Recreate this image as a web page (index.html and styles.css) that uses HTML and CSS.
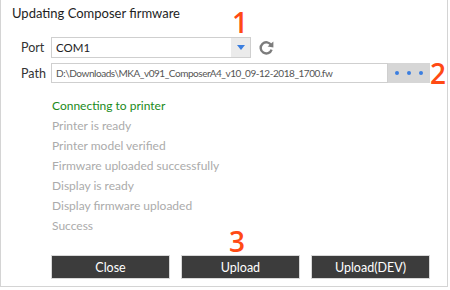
FILE: index.html
```html
<!DOCTYPE html>
<html lang="en">
<head>
    <meta charset="UTF-8">
    <title>Updating Composer firmware</title>
    <link rel="stylesheet" href="styles.css">
</head>
<body>
    <div class="window">
        <div class="title">Updating Composer firmware</div>

        <div class="row port-row">
            <label class="field-label">Port</label>
            <div class="select">
                <span class="select-value">COM1</span>
                <span class="select-arrow"><span class="triangle"></span></span>
            </div>
            <svg class="refresh" width="17" height="17" viewBox="0 0 17 17">
                <path d="M13.2 6.2 A5.6 5.6 0 1 0 13.6 10.6" fill="none" stroke="#7c7c7c" stroke-width="2.4"/>
                <polygon points="15.4,2.4 15.4,8.4 9.6,7.6" fill="#7c7c7c"/>
            </svg>
            <span class="marker marker-1">1</span>
        </div>

        <div class="row path-row">
            <label class="field-label">Path</label>
            <div class="path-input">D:\Downloads\MKA_v091_ComposerA4_v10_09-12-2018_1700.fw</div>
            <div class="browse"><span></span><span></span><span></span></div>
            <span class="marker marker-2">2</span>
        </div>

        <ul class="steps">
            <li class="active">Connecting to printer</li>
            <li>Printer is ready</li>
            <li>Printer model verified</li>
            <li>Firmware uploaded successfully</li>
            <li>Display is ready</li>
            <li>Display firmware uploaded</li>
            <li>Success</li>
        </ul>

        <div class="buttons">
            <button>Close</button>
            <button>Upload</button>
            <button>Upload(DEV)</button>
            <span class="marker marker-3">3</span>
        </div>
    </div>
</body>
</html>
```

FILE: styles.css
```css
body {
    margin: 0;
    background: #fff;
    font-family: Lato, 'Noto Sans', sans-serif;
    color: #222;
}
.window {
    position: relative;
    width: 446px;
    height: 286px;
    border: 1px solid #d4d4d4;
    border-top: none;
    background: #fff;
}
.title {
    padding: 4px 0 0 11px;
    font-size: 13px;
    line-height: 18px;
    color: #1e1e1e;
}
.row {
    position: relative;
    display: flex;
    align-items: center;
    padding-left: 20px;
}
.port-row {
    margin-top: 15px;
    height: 21px;
}
.path-row {
    margin-top: 5px;
    height: 20px;
}
.field-label {
    width: 30px;
    font-size: 12.5px;
    color: #333;
}
.select {
    display: flex;
    width: 198px;
    height: 19px;
    border: 1px solid #cfcfcf;
}
.select-value {
    flex: 1;
    padding-left: 4px;
    font-size: 11.5px;
    line-height: 19px;
    color: #222;
}
.select-arrow {
    display: flex;
    align-items: center;
    justify-content: center;
    width: 19px;
    background: #ebebeb;
}
.triangle {
    width: 0;
    height: 0;
    border-left: 4px solid transparent;
    border-right: 4px solid transparent;
    border-top: 5px solid #3a7ee0;
}
.refresh {
    margin-left: 7px;
}
.path-input {
    width: 331px;
    height: 18px;
    border: 1px solid #cfcfcf;
    padding-left: 4px;
    font-size: 10px;
    letter-spacing: -0.45px;
    line-height: 18px;
    color: #555;
    white-space: nowrap;
    overflow: hidden;
}
.browse {
    display: flex;
    align-items: center;
    justify-content: center;
    gap: 8px;
    width: 42px;
    height: 20px;
    background: #d6d6d6;
}
.browse span {
    width: 4px;
    height: 4px;
    border-radius: 50%;
    background: #3a7ee0;
}
.steps {
    list-style: none;
    margin: 13px 0 0 51px;
    padding: 0;
    font-size: 12px;
    line-height: 20px;
    color: #ababab;
}
.steps .active {
    color: #1a8a1a;
}
.buttons {
    position: relative;
    display: flex;
    gap: 11px;
    margin: 19px 0 0 50px;
}
button {
    width: 119px;
    height: 24px;
    border: 1px solid #d8d8d8;
    background: #3c3c3c;
    color: #fff;
    font-family: Lato, 'Noto Sans', sans-serif;
    font-size: 12.5px;
    padding: 0;
}
.marker {
    position: absolute;
    color: #ff4a14;
    font-family: 'Open Sans', sans-serif;
    font-weight: 600;
    font-size: 28px;
    line-height: 28px;
}
.marker-1 {
    left: 231px;
    top: -29px;
}
.marker-2 {
    left: 429px;
    top: -4px;
}
.marker-3 {
    left: 178px;
    top: -28px;
}
```
